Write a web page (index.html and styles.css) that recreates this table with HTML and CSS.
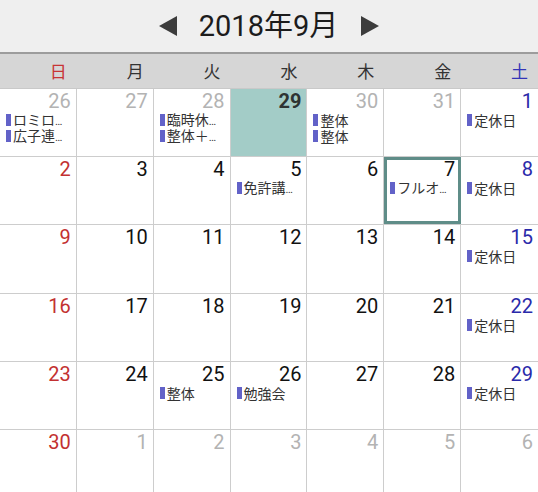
FILE: index.html
```html
<!DOCTYPE html>
<html lang="ja">
<head>
<meta charset="utf-8">
<title>2018年9月</title>
<link rel="stylesheet" href="styles.css">
</head>
<body>
<div class="app">
  <header class="titlebar">
    <svg class="arrow" width="18" height="20" viewBox="0 0 18 20"><polygon points="18,0 18,20 0,10"/></svg>
    <h1 class="title">2018年9月</h1>
    <svg class="arrow" width="18" height="20" viewBox="0 0 18 20"><polygon points="0,0 0,20 18,10"/></svg>
  </header>
  <div class="weekdays">
    <div class="wd sun">日</div><div class="wd">月</div><div class="wd">火</div><div class="wd">水</div><div class="wd">木</div><div class="wd">金</div><div class="wd sat">土</div>
  </div>
  <div class="grid">
    <div class="cell"><div class="num muted">26</div><div class="ev"><i></i><span>ロミロ<b>…</b></span></div><div class="ev"><i></i><span>広子連<b>…</b></span></div></div>
    <div class="cell"><div class="num muted">27</div></div>
    <div class="cell"><div class="num muted">28</div><div class="ev"><i></i><span>臨時休<b>…</b></span></div><div class="ev"><i></i><span>整体＋<b>…</b></span></div></div>
    <div class="cell today"><div class="num bold">29</div></div>
    <div class="cell"><div class="num muted">30</div><div class="ev"><i></i><span>整体</span></div><div class="ev"><i></i><span>整体</span></div></div>
    <div class="cell"><div class="num muted">31</div></div>
    <div class="cell"><div class="num sat">1</div><div class="ev"><i></i><span>定休日</span></div></div>

    <div class="cell"><div class="num sun">2</div></div>
    <div class="cell"><div class="num">3</div></div>
    <div class="cell"><div class="num">4</div></div>
    <div class="cell"><div class="num">5</div><div class="ev"><i></i><span>免許講<b>…</b></span></div></div>
    <div class="cell"><div class="num">6</div></div>
    <div class="cell selected"><div class="num">7</div><div class="ev"><i></i><span>フルオ<b>…</b></span></div></div>
    <div class="cell"><div class="num sat">8</div><div class="ev"><i></i><span>定休日</span></div></div>

    <div class="cell"><div class="num sun">9</div></div>
    <div class="cell"><div class="num">10</div></div>
    <div class="cell"><div class="num">11</div></div>
    <div class="cell"><div class="num">12</div></div>
    <div class="cell"><div class="num">13</div></div>
    <div class="cell"><div class="num">14</div></div>
    <div class="cell"><div class="num sat">15</div><div class="ev"><i></i><span>定休日</span></div></div>

    <div class="cell"><div class="num sun">16</div></div>
    <div class="cell"><div class="num">17</div></div>
    <div class="cell"><div class="num">18</div></div>
    <div class="cell"><div class="num">19</div></div>
    <div class="cell"><div class="num">20</div></div>
    <div class="cell"><div class="num">21</div></div>
    <div class="cell"><div class="num sat">22</div><div class="ev"><i></i><span>定休日</span></div></div>

    <div class="cell"><div class="num sun">23</div></div>
    <div class="cell"><div class="num">24</div></div>
    <div class="cell"><div class="num">25</div><div class="ev"><i></i><span>整体</span></div></div>
    <div class="cell"><div class="num">26</div><div class="ev"><i></i><span>勉強会</span></div></div>
    <div class="cell"><div class="num">27</div></div>
    <div class="cell"><div class="num">28</div></div>
    <div class="cell"><div class="num sat">29</div><div class="ev"><i></i><span>定休日</span></div></div>

    <div class="cell"><div class="num sun">30</div></div>
    <div class="cell"><div class="num muted">1</div></div>
    <div class="cell"><div class="num muted">2</div></div>
    <div class="cell"><div class="num muted">3</div></div>
    <div class="cell"><div class="num muted">4</div></div>
    <div class="cell"><div class="num muted">5</div></div>
    <div class="cell"><div class="num muted">6</div></div>
  </div>
</div>
</body>
</html>
```
FILE: styles.css
```css
html, body {
  margin: 0;
  padding: 0;
  background: #ffffff;
}
body {
  width: 538px;
  height: 492px;
  overflow: hidden;
  font-family: Roboto, "Noto Sans CJK JP", sans-serif;
}
.app {
  width: 538px;
}
.titlebar {
  box-sizing: border-box;
  height: 54px;
  background: #efefef;
  border-bottom: 2px solid #9c9c9c;
  display: flex;
  align-items: flex-start;
  justify-content: center;
  padding-top: 12px;
}
.arrow {
  fill: #3c3c3c;
  margin-top: 4px;
}
.title {
  margin: 0 23px 0 22px;
  font-family: Roboto, "Noto Sans CJK JP", sans-serif;
  font-weight: 400;
  font-size: 29px;
  line-height: 28px;
  color: #1c1c1c;
}
.weekdays {
  display: grid;
  grid-template-columns: repeat(7, 1fr);
  height: 34px;
  background: #d6d6d6;
  border-bottom: 1px solid #c9c9c9;
}
.wd {
  font-family: "Noto Sans CJK JP", sans-serif;
  font-size: 17px;
  line-height: 34px;
  text-align: right;
  padding-right: 10px;
  color: #333333;
}
.wd.sun { color: #c83434; }
.wd.sat { color: #3434b8; }
.grid {
  display: grid;
  grid-template-columns: repeat(7, 1fr);
  grid-auto-rows: 68.2px;
}
.cell {
  position: relative;
  border-right: 1px solid #cdcdcd;
  border-bottom: 1px solid #cdcdcd;
  padding: 1px 5px 0 6px;
  min-width: 0;
}
.cell:nth-child(7n) {
  border-right: none;
}
.num {
  text-align: right;
  font-family: Roboto, sans-serif;
  font-size: 20px;
  line-height: 22px;
  color: #111111;
}
.num.muted { color: #b3b3b3; }
.num.sun { color: #c33131; }
.num.sat { color: #2a2aaa; }
.num.bold { font-weight: 700; color: #2e3433; }
.today {
  background: #a3ccc7;
}
.selected::after {
  content: "";
  position: absolute;
  left: 0;
  top: 0;
  right: -1px;
  bottom: 0;
  border: 3px solid #5f8d88;
  pointer-events: none;
}
.ev {
  display: flex;
  align-items: center;
  gap: 2px;
  height: 16px;
  font-family: "Noto Sans CJK JP", sans-serif;
  font-size: 14px;
  line-height: 16px;
  color: #333333;
  white-space: nowrap;
}
.ev i {
  display: block;
  width: 5px;
  height: 12px;
  flex: none;
  background: #6262c8;
}
.ev b {
  font-weight: 400;
  font-family: Roboto, sans-serif;
  font-size: 11px;
  letter-spacing: -1px;
}
```
